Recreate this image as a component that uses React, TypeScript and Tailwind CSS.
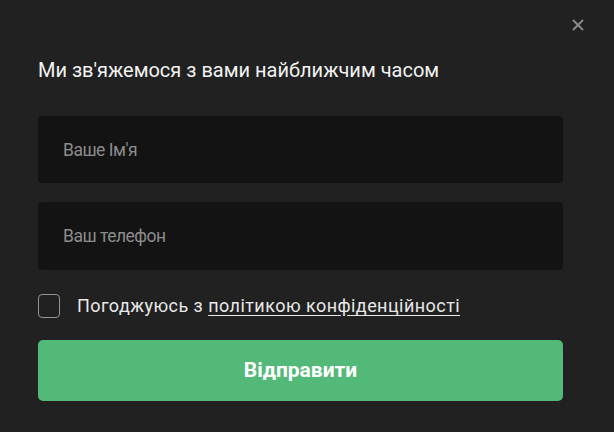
import { X } from "lucide-react";

export default function App() {
  return (
    <div className="relative h-[432px] w-[614px] bg-[#212121] font-['Roboto',sans-serif]">
      {/* Close button */}
      <button className="absolute right-[27px] top-[16px] text-[#8a8a8a]" aria-label="Закрити">
        <X size={18} strokeWidth={2.5} />
      </button>

      <div className="flex flex-col px-[38px] pt-[56px] pr-[51px]">
        <h2 className="font-['Roboto',sans-serif] text-[20px] leading-[28px] tracking-[0px] text-[#f2f2f2]">
          Ми зв'яжемося з вами найближчим часом
        </h2>

        <div className="mt-[32px] flex flex-col gap-[19px]">
          <input
            className="h-[67px] w-full rounded-[4px] bg-[#131313] px-[25px] text-[17.5px] tracking-[-0.5px] text-white outline-none placeholder:text-[#8c8c8c]"
            placeholder="Ваше Ім'я"
          />
          <input
            className="h-[68px] w-full rounded-[4px] bg-[#131313] px-[25px] text-[17.5px] tracking-[-0.5px] text-white outline-none placeholder:text-[#8c8c8c]"
            placeholder="Ваш телефон"
          />
        </div>

        <label className="mt-[22px] flex items-center gap-[17px] text-[18px] tracking-[0.45px] text-[#e8e8e8]">
          <span className="h-[24px] w-[22px] rounded-[4px] border border-[#8e9499]" />
          <span>
            Погоджуюсь з{" "}
            <a href="#" className="underline underline-offset-[3px]">
              політикою конфіденційності
            </a>
          </span>
        </label>

        <button className="mt-[21px] h-[61px] w-full rounded-[5px] bg-[#53b978] text-[21px] font-bold text-white">
          Відправити
        </button>
      </div>
    </div>
  );
}
